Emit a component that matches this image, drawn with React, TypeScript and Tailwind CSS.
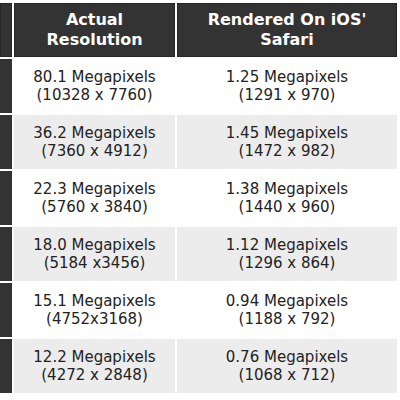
const rows = [
  ["80.1 Megapixels", "(10328 x 7760)", "1.25 Megapixels", "(1291 x 970)"],
  ["36.2 Megapixels", "(7360 x 4912)", "1.45 Megapixels", "(1472 x 982)"],
  ["22.3 Megapixels", "(5760 x 3840)", "1.38 Megapixels", "(1440 x 960)"],
  ["18.0 Megapixels", "(5184 x3456)", "1.12 Megapixels", "(1296 x 864)"],
  ["15.1 Megapixels", "(4752x3168)", "0.94 Megapixels", "(1188 x 792)"],
  ["12.2 Megapixels", "(4272 x 2848)", "0.76 Megapixels", "(1068 x 712)"],
];

export default function App() {
  return (
    <div className="h-[400px] w-[400px] overflow-hidden bg-white pt-[3px] font-['DejaVu_Sans',Verdana,sans-serif]">
      <div className="grid grid-cols-[12px_161px_220px] gap-[2px]">
        <div className="h-[54px] border border-[#262626] bg-[#333333]" />
        <div className="flex h-[54px] flex-col items-center justify-center border border-[#262626] bg-[#333333] text-[16px] font-bold leading-[20px] text-white">
          <span>Actual</span>
          <span>Resolution</span>
        </div>
        <div className="flex h-[54px] flex-col items-center justify-center border border-[#262626] bg-[#333333] text-[16px] font-bold leading-[20px] text-white">
          <span>Rendered On iOS'</span>
          <span>Safari</span>
        </div>

        {rows.map((r, i) => {
          const bg = i % 2 === 0 ? "bg-white" : "bg-[#ececec]";
          return [
            <div key={`l${i}`} className="h-[54px] bg-[#333333]" />,
            <div
              key={`a${i}`}
              className={`flex h-[54px] flex-col items-center justify-center text-[15px] leading-[18px] text-[#222] ${bg}`}
            >
              <span>{r[0]}</span>
              <span>{r[1]}</span>
            </div>,
            <div
              key={`b${i}`}
              className={`flex h-[54px] flex-col items-center justify-center text-[15px] leading-[18px] text-[#222] ${bg}`}
            >
              <span>{r[2]}</span>
              <span>{r[3]}</span>
            </div>,
          ];
        })}
      </div>
    </div>
  );
}
